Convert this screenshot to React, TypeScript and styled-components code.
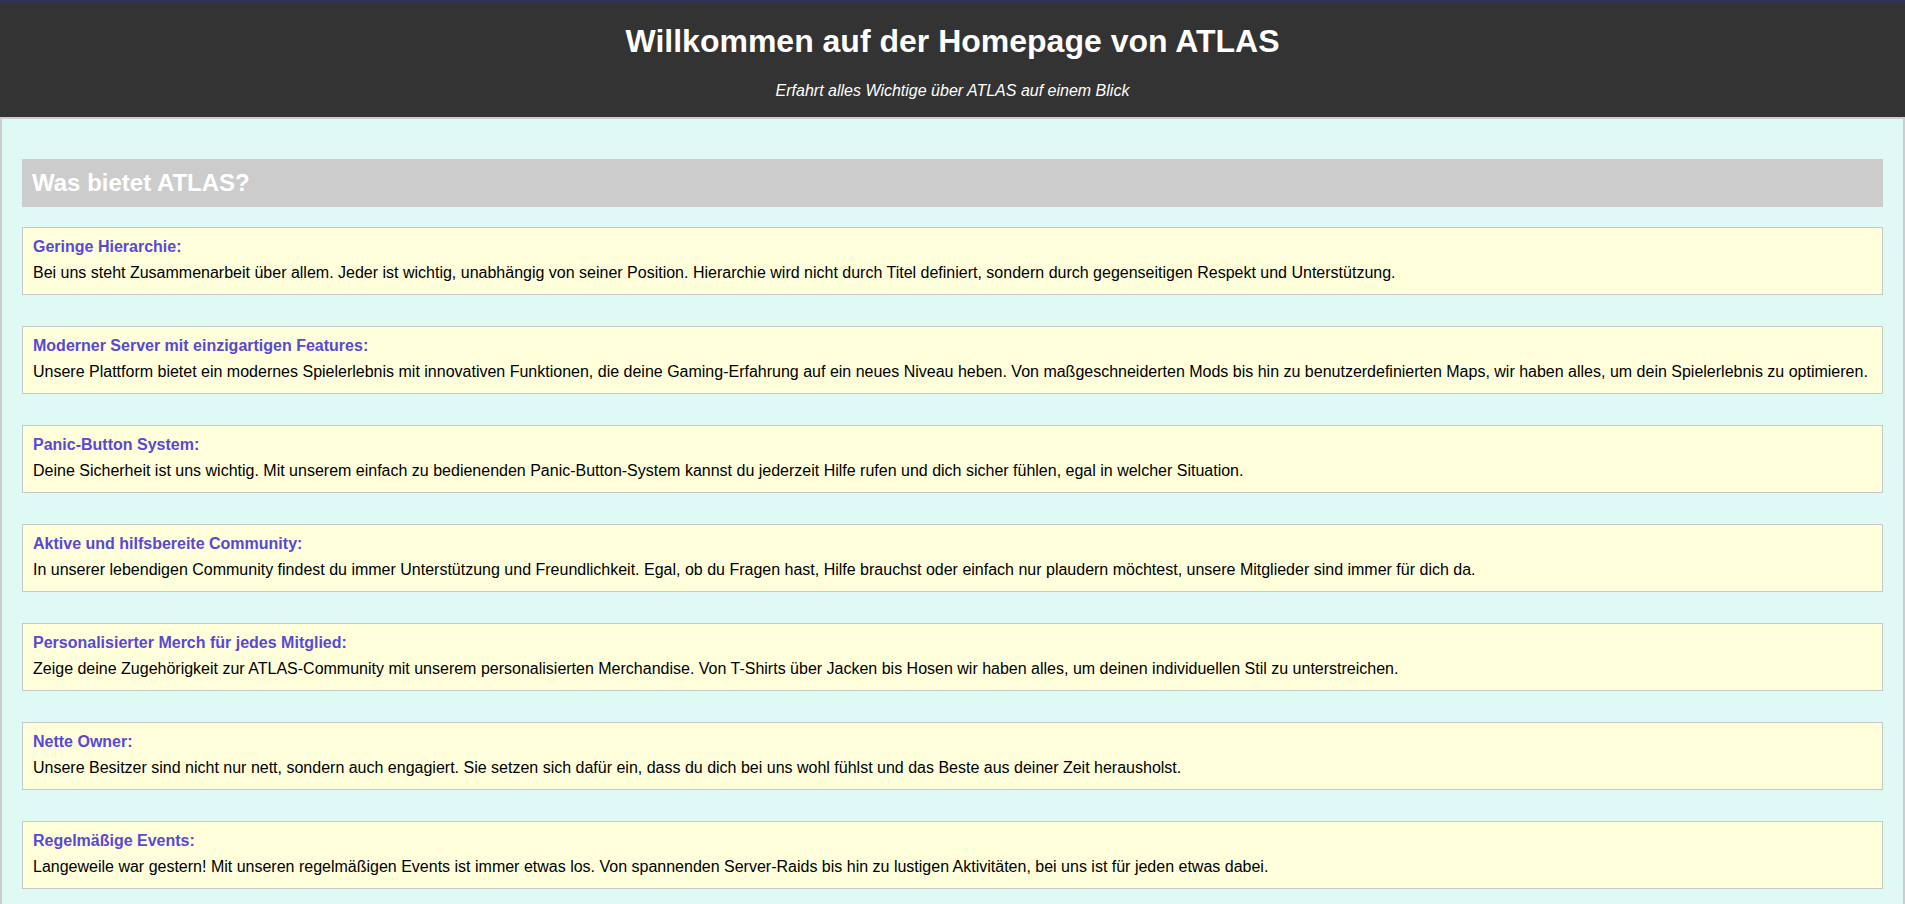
import React from "react";
import styled, { createGlobalStyle } from "styled-components";

const GlobalStyle = createGlobalStyle`
  html, body {
    margin: 0;
    padding: 0;
  }
  body {
    font-family: "Liberation Sans", Arial, sans-serif;
    background: #dff9f4;
  }
`;

const Header = styled.header`
  background: #333333;
  color: #ffffff;
  text-align: center;
  border-top: 2px solid #2b3163;
  padding: 21px 20px 0;
`;

const Title = styled.h1`
  font-size: 32px;
  font-weight: bold;
  margin: 0 0 22px;
`;

const Subtitle = styled.p`
  font-size: 16px;
  font-style: italic;
  margin: 0;
  padding-bottom: 17px;
`;

const Main = styled.main`
  background: #dff9f4;
  border: 2px solid #cccccc;
  padding: 20px;
`;

const SectionTitle = styled.h2`
  background: #cccccc;
  color: #ffffff;
  font-size: 24px;
  font-weight: bold;
  padding: 10px;
  margin: 20px 0 20px;
`;

const List = styled.div`
  display: flex;
  flex-direction: column;
  gap: 31px;
`;

const Card = styled.div`
  background: #ffffdc;
  border: 1px solid #c8c8c8;
  padding: 10px;
`;

const CardTitle = styled.h3`
  color: #5a49d4;
  font-size: 16px;
  font-weight: bold;
  margin: 0 0 5px;
  line-height: 18.6px;
`;

const CardText = styled.p`
  color: #000000;
  font-size: 16px;
  line-height: 1.4;
  margin: 0;
`;

const features = [
  {
    title: "Geringe Hierarchie:",
    text: "Bei uns steht Zusammenarbeit über allem. Jeder ist wichtig, unabhängig von seiner Position. Hierarchie wird nicht durch Titel definiert, sondern durch gegenseitigen Respekt und Unterstützung.",
  },
  {
    title: "Moderner Server mit einzigartigen Features:",
    text: "Unsere Plattform bietet ein modernes Spielerlebnis mit innovativen Funktionen, die deine Gaming-Erfahrung auf ein neues Niveau heben. Von maßgeschneiderten Mods bis hin zu benutzerdefinierten Maps, wir haben alles, um dein Spielerlebnis zu optimieren.",
  },
  {
    title: "Panic-Button System:",
    text: "Deine Sicherheit ist uns wichtig. Mit unserem einfach zu bedienenden Panic-Button-System kannst du jederzeit Hilfe rufen und dich sicher fühlen, egal in welcher Situation.",
  },
  {
    title: "Aktive und hilfsbereite Community:",
    text: "In unserer lebendigen Community findest du immer Unterstützung und Freundlichkeit. Egal, ob du Fragen hast, Hilfe brauchst oder einfach nur plaudern möchtest, unsere Mitglieder sind immer für dich da.",
  },
  {
    title: "Personalisierter Merch für jedes Mitglied:",
    text: "Zeige deine Zugehörigkeit zur ATLAS-Community mit unserem personalisierten Merchandise. Von T-Shirts über Jacken bis Hosen wir haben alles, um deinen individuellen Stil zu unterstreichen.",
  },
  {
    title: "Nette Owner:",
    text: "Unsere Besitzer sind nicht nur nett, sondern auch engagiert. Sie setzen sich dafür ein, dass du dich bei uns wohl fühlst und das Beste aus deiner Zeit herausholst.",
  },
  {
    title: "Regelmäßige Events:",
    text: "Langeweile war gestern! Mit unseren regelmäßigen Events ist immer etwas los. Von spannenden Server-Raids bis hin zu lustigen Aktivitäten, bei uns ist für jeden etwas dabei.",
  },
];

export default function App() {
  return (
    <>
      <GlobalStyle />
      <Header>
        <Title>Willkommen auf der Homepage von ATLAS</Title>
        <Subtitle>Erfahrt alles Wichtige über ATLAS auf einem Blick</Subtitle>
      </Header>
      <Main>
        <SectionTitle>Was bietet ATLAS?</SectionTitle>
        <List>
          {features.map((f) => (
            <Card key={f.title}>
              <CardTitle>{f.title}</CardTitle>
              <CardText>{f.text}</CardText>
            </Card>
          ))}
        </List>
      </Main>
    </>
  );
}
